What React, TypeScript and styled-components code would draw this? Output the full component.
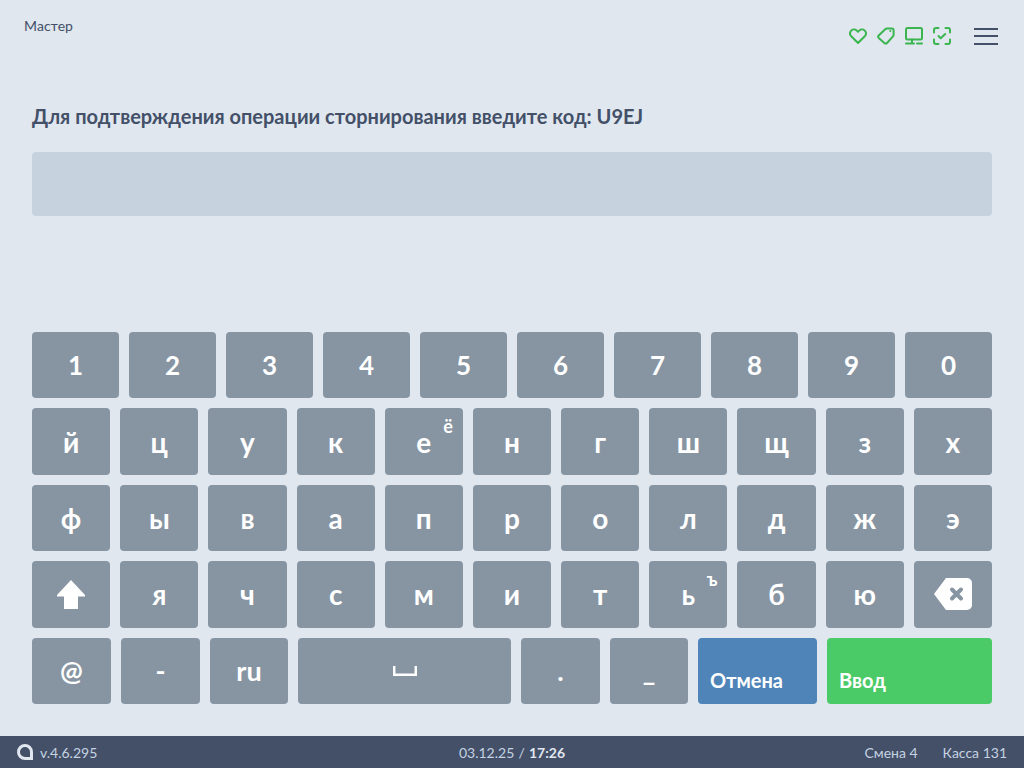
import React from "react";
import styled, { createGlobalStyle } from "styled-components";

const Global = createGlobalStyle`
  html, body { margin: 0; padding: 0; }
  body { font-family: "Lato", "Noto Sans", sans-serif; background: #e0e7ef; }
  * { box-sizing: border-box; }
`;

const Page = styled.div`
  width: 1024px;
  height: 768px;
  display: flex;
  flex-direction: column;
  background: #e0e7ef;
  overflow: hidden;
`;

const Header = styled.header`
  height: 99px;
  padding: 18px 26px 0 24px;
  display: flex;
  justify-content: space-between;
  align-items: flex-start;
`;

const Operator = styled.div`
  font-size: 14px;
  line-height: 16px;
  font-weight: 400;
  letter-spacing: 0.1px;
  color: #435068;
`;

const Status = styled.div`
  display: flex;
  align-items: center;
  margin-top: 8px;
`;

const StatusIcon = styled.svg`
  width: 20px;
  height: 20px;
  margin-right: 8px;
  fill: none;
  stroke: #3bb54f;
  stroke-width: 2;
  stroke-linecap: round;
  stroke-linejoin: round;
`;

const Burger = styled.div`
  width: 24px;
  margin-left: 14px;
  display: flex;
  flex-direction: column;
  gap: 5.5px;
`;

const BurgerBar = styled.span`
  display: block;
  height: 2px;
  background: #435068;
`;

const Main = styled.main`
  flex: 1;
  padding: 0 32px;
  display: flex;
  flex-direction: column;
`;

const Title = styled.h1`
  margin: 0;
  height: 34px;
  font-size: 20px;
  line-height: 34px;
  font-weight: 700;
  color: #435068;
`;

const Field = styled.div`
  margin-top: 19px;
  height: 64px;
  border-radius: 4px;
  background: #c6d2de;
`;

const Keyboard = styled.div`
  margin-top: auto;
  margin-bottom: 32px;
  height: 372px;
  display: grid;
  grid-template-rows: repeat(5, 1fr);
  gap: 10px;
`;

const Row = styled.div<{ $columns: string }>`
  display: grid;
  grid-template-columns: ${(p) => p.$columns};
  gap: 10px;
  min-height: 0;
`;

const Key = styled.div<{ $size?: number }>`
  position: relative;
  display: flex;
  align-items: center;
  justify-content: center;
  border-radius: 4px;
  background: #8795a3;
  color: #fff;
  font-size: ${(p) => p.$size ?? 28}px;
  font-weight: 700;
  line-height: 1;
`;

const Hint = styled.span`
  position: absolute;
  top: 9px;
  right: 10px;
  font-size: 18px;
  line-height: 18px;
  font-weight: 700;
`;

const ActionKey = styled.div<{ $bg: string }>`
  display: flex;
  align-items: flex-end;
  padding: 0 12px 11px;
  border-radius: 4px;
  background: ${(p) => p.$bg};
  color: #fff;
  font-size: 20px;
  line-height: 26px;
  font-weight: 700;
`;

const Footer = styled.footer`
  height: 32px;
  padding: 0 17px;
  display: grid;
  grid-template-columns: 1fr auto 1fr;
  align-items: center;
  background: #435068;
  color: #c5d3e2;
  font-size: 14px;
`;

const Version = styled.div`
  display: flex;
  align-items: center;
  gap: 7px;
`;

const DateTime = styled.div`
  word-spacing: 0.6px;
  b { font-weight: 700; color: #e0e7ef; }
`;

const Shift = styled.div`
  display: flex;
  justify-content: flex-end;
  gap: 25px;
`;

const digits = ["1", "2", "3", "4", "5", "6", "7", "8", "9", "0"];
const row2: [string, string?][] = [["й"], ["ц"], ["у"], ["к"], ["е", "ё"], ["н"], ["г"], ["ш"], ["щ"], ["з"], ["х"]];
const row3 = ["ф", "ы", "в", "а", "п", "р", "о", "л", "д", "ж", "э"];
const row4: [string, string?][] = [["я"], ["ч"], ["с"], ["м"], ["и"], ["т"], ["ь", "ъ"], ["б"], ["ю"]];

export default function App() {
  return (
    <Page>
      <Global />
      <Header>
        <Operator>Мастер</Operator>
        <Status>
          <StatusIcon viewBox="0 0 20 20">
            <path d="M10 17 3.200 10.200a4.200 4.200 0 0 1 0-5.600 4 4 0 0 1 5.600 0L10 5.800l1.200-1.200a4 4 0 0 1 5.600 0 4.200 4.200 0 0 1 0 5.600z" />
          </StatusIcon>
          <StatusIcon viewBox="0 0 20 20">
            <path d="M2.700 9.500 9.500 3a2 2 0 0 1 1.400-.600H16a1.600 1.600 0 0 1 1.600 1.600V9a2 2 0 0 1-.600 1.400L11 17a1.800 1.800 0 0 1-2.600 0L2.700 11.900a1.700 1.700 0 0 1 0-2.400z" />
            <path d="M14.300 4.900h.01" />
          </StatusIcon>
          <StatusIcon viewBox="0 0 20 20">
            <rect x="2" y="2" width="16" height="11.500" rx="1.500" />
            <path d="M8 13.500v4M2 17.500h8M13 17.500h5" />
          </StatusIcon>
          <StatusIcon viewBox="0 0 20 20">
            <path d="M2 6.500V4a2 2 0 0 1 2-2h2.500M13.500 2H16a2 2 0 0 1 2 2v2.500M18 13.500V16a2 2 0 0 1-2 2h-2.500M6.500 18H4a2 2 0 0 1-2-2v-2.500" />
            <path d="m6.500 10 2.200 2.200 4.500-4.200" />
          </StatusIcon>
          <Burger>
            <BurgerBar />
            <BurgerBar />
            <BurgerBar />
          </Burger>
        </Status>
      </Header>
      <Main>
        <Title>Для подтверждения операции сторнирования введите код: U9EJ</Title>
        <Field />
        <Keyboard>
          <Row $columns="repeat(10, 1fr)">
            {digits.map((d) => <Key key={d} $size={26}>{d}</Key>)}
          </Row>
          <Row $columns="repeat(11, 1fr)">
            {row2.map(([k, h]) => (
              <Key key={k}>{k}{h && <Hint>{h}</Hint>}</Key>
            ))}
          </Row>
          <Row $columns="repeat(11, 1fr)">
            {row3.map((k) => <Key key={k}>{k}</Key>)}
          </Row>
          <Row $columns="repeat(11, 1fr)">
            <Key>
              <svg width="30" height="30" viewBox="0 0 30 30" fill="#fff">
                <path d="M15 1 29 16.500 29 18H22V31H8V18H1V16.500z" transform="scale(1 .97)" />
              </svg>
            </Key>
            {row4.map(([k, h]) => (
              <Key key={k}>{k}{h && <Hint>{h}</Hint>}</Key>
            ))}
            <Key>
              <svg width="38" height="32" viewBox="0 0 38 32">
                <path fill="#fff" d="M12 0H33a5 5 0 0 1 5 5V27a5 5 0 0 1-5 5H12L0 16z" />
                <path stroke="#8795a3" strokeWidth="4" strokeLinecap="round" d="M18 11.500 L27 20.500 M27 11.500 L18 20.500" />
              </svg>
            </Key>
          </Row>
          <Row $columns="79fr 79fr 78fr 213fr 79fr 78fr 119fr 165fr">
            <Key $size={27}>@</Key>
            <Key $size={27}>-</Key>
            <Key $size={27}>ru</Key>
            <Key>
              <svg width="24" height="10" viewBox="0 0 24 10" fill="none" stroke="#fff" strokeWidth="2.500">
                <path d="M1.200 0V8.700H22.800V0" />
              </svg>
            </Key>
            <Key $size={27}>.</Key>
            <Key $size={27}>_</Key>
            <ActionKey $bg="#4e84b8">Отмена</ActionKey>
            <ActionKey $bg="#4bca68">Ввод</ActionKey>
          </Row>
        </Keyboard>
      </Main>
      <Footer>
        <Version>
          <svg width="16" height="16" viewBox="0 0 16 16" fill="none" stroke="#e0e7ef" strokeWidth="3">
            <path d="M14.500 14.500H8A6.500 6.500 0 1 1 14.500 8z" />
          </svg>
          v.4.6.295
        </Version>
        <DateTime>03.12.25 / <b>17:26</b></DateTime>
        <Shift>
          <span>Смена 4</span>
          <span>Касса 131</span>
        </Shift>
      </Footer>
    </Page>
  );
}
